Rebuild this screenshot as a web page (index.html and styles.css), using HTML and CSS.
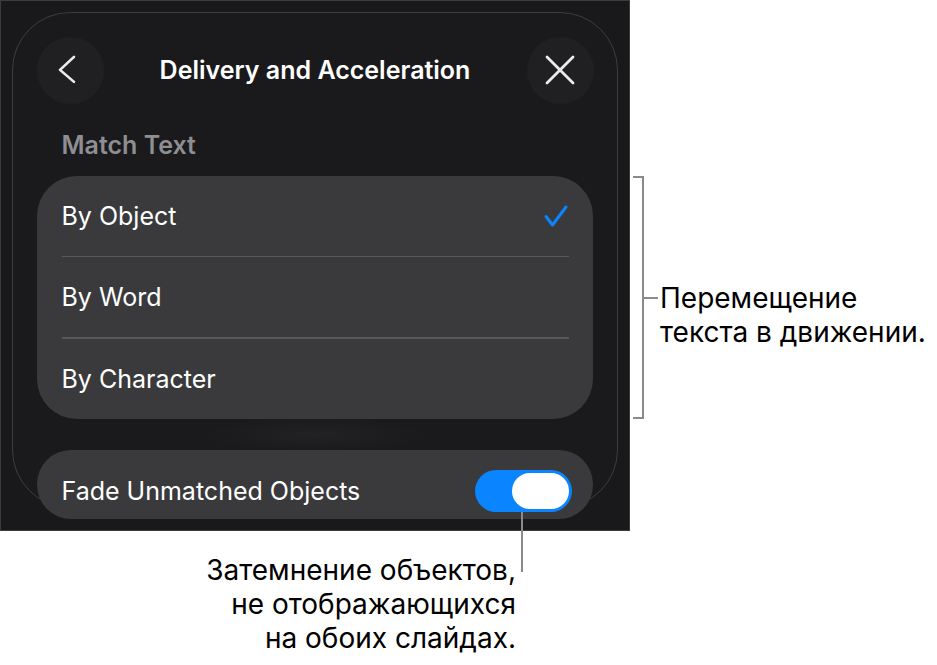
FILE: index.html
```html
<!DOCTYPE html>
<html lang="ru">
<head>
<meta charset="utf-8">
<link rel="stylesheet" href="styles.css">
</head>
<body>
<div class="page">
  <div class="top">
    <div class="screen">
      <div class="panel">
        <div class="header">
          <div class="round-btn">
            <svg width="30" height="30" viewBox="0 0 30 30"><path d="M22 2 L8 16 L22 29" transform="translate(-3,0) scale(1,0.93)" fill="none" stroke="#ececec" stroke-width="2.6" stroke-linecap="round" stroke-linejoin="round"/></svg>
          </div>
          <div class="title">Delivery and Acceleration</div>
          <div class="round-btn">
            <svg width="30" height="30" viewBox="0 0 30 30"><path d="M2 2 L28 28 M28 2 L2 28" fill="none" stroke="#ececec" stroke-width="2.8" stroke-linecap="round"/></svg>
          </div>
        </div>
        <div class="section-label">Match Text</div>
        <div class="card">
          <div class="row">
            <span>By Object</span>
            <svg class="check" width="26" height="24" viewBox="0 0 26 24"><path d="M3 12.5 L9.5 21 L23 3" fill="none" stroke="#0a84ff" stroke-width="3" stroke-linecap="round" stroke-linejoin="round"/></svg>
          </div>
          <div class="divider"></div>
          <div class="row"><span>By Word</span></div>
          <div class="divider"></div>
          <div class="row"><span>By Character</span></div>
        </div>
        <div class="gap-strip"></div>
        <div class="card toggle-card">
          <span>Fade Unmatched Objects</span>
          <div class="toggle"><div class="knob"></div></div>
        </div>
      </div>
    </div>
    <div class="right-callout">
      <div class="bracket"></div>
      <div class="leader-h"></div>
      <p class="callout-text right-text">Перемещение<br>текста в движении.</p>
    </div>
  </div>
  <div class="bottom-callout">
    <p class="callout-text bottom-text">Затемнение объектов,<br>не отображающихся<br>на обоих слайдах.</p>
  </div>
  <div class="leader-v"></div>
</div>
</body>
</html>
```

FILE: styles.css
```css
* { box-sizing: border-box; }
html, body { margin: 0; padding: 0; background: #ffffff; }
body { font-family: "Inter", "Noto Sans", sans-serif; }

.page { position: relative; width: 937px; height: 665px; }

.top { display: flex; align-items: flex-start; }

.screen {
  width: 630px;
  height: 531px;
  background: #19191b;
  border: 1px solid #3c3c3e;
  padding: 11px 11px 0 11px;
  flex: none;
}

.panel {
  width: 606px;
  height: 496px;
  border: 1.5px solid #3d3d40;
  border-radius: 58px;
  background: #1a1a1c;
  padding: 23.5px 23.5px 0 23.5px;
}

.header {
  display: flex;
  align-items: center;
  justify-content: space-between;
  height: 67px;
}

.round-btn {
  width: 67px;
  height: 67px;
  border-radius: 50%;
  background: #202022;
  display: flex;
  align-items: center;
  justify-content: center;
}

.title {
  color: #ffffff;
  font-size: 25px;
  font-weight: 600;
  letter-spacing: 0;
}

.section-label {
  margin: 26px 0 16px 25px;
  color: #8e8e93;
  font-size: 25px;
  font-weight: 600;
  line-height: 30px;
}

.card {
  background: #3a3a3c;
  border-radius: 40px;
  width: 556px;
}

.row {
  height: 80px;
  display: flex;
  align-items: center;
  justify-content: space-between;
  padding: 0 24px 0 25px;
  color: #ffffff;
  font-size: 25px;
}

.check { margin-top: 1px; }

.divider {
  height: 1.5px;
  background: #58585c;
  margin: 0 24px 0 25px;
}

.gap-strip {
  height: 31px;
  background: radial-gradient(ellipse 110px 18px at 50% 50%, rgba(255,255,255,0.035), rgba(255,255,255,0) 100%);
}

.toggle-card {
  height: 69px;
  border-radius: 34px;
  display: flex;
  align-items: center;
  justify-content: space-between;
  padding: 13px 21px 0 25px;
  color: #ffffff;
  font-size: 25px;
  position: relative;
}

.toggle {
  width: 97px;
  height: 42px;
  border-radius: 21px;
  background: #0a84ff;
  display: flex;
  align-items: center;
  justify-content: flex-end;
  padding-right: 3px;
}

.knob {
  width: 57px;
  height: 36px;
  border-radius: 18px;
  background: #ffffff;
}

.right-callout {
  display: flex;
  align-items: center;
  margin-top: 176px;
  margin-left: 3px;
  height: 243px;
}

.bracket {
  width: 11px;
  height: 243px;
  border: 2px solid #8a8a8a;
  border-left: none;
}

.leader-h {
  width: 14px;
  height: 2px;
  background: #8a8a8a;
}

.callout-text {
  margin: 0;
  color: #000000;
  font-size: 28px;
  line-height: 34px;
  white-space: nowrap;
}

.right-text { margin-left: 2px; margin-top: 34px; }

.bottom-callout {
  width: 516px;
  margin-top: 22px;
  text-align: right;
}

.leader-v {
  position: absolute;
  left: 521px;
  top: 512px;
  width: 2px;
  height: 60px;
  background: #8a8a8a;
}
```
